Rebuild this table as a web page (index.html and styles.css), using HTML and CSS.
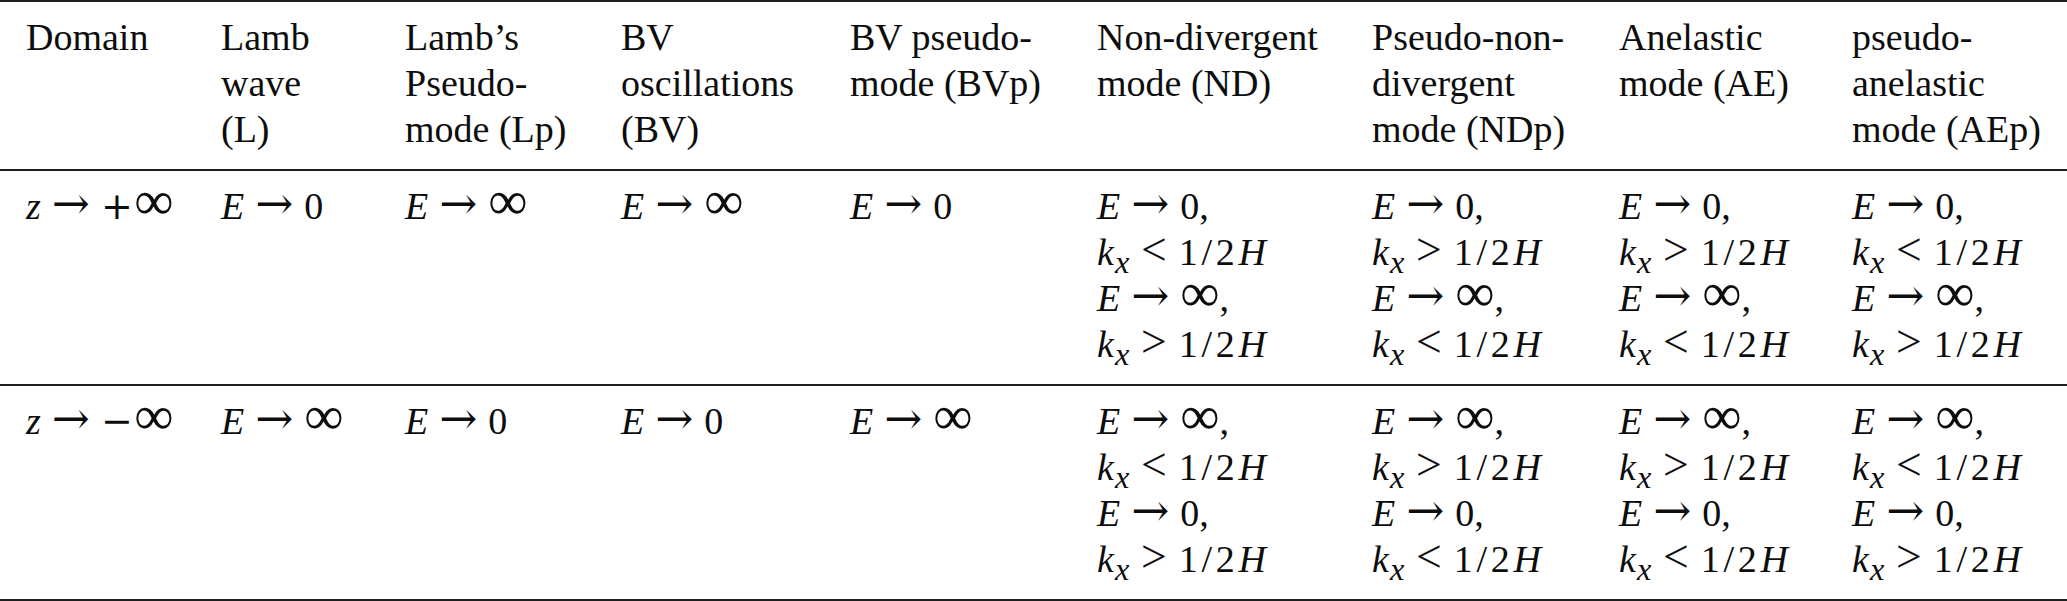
FILE: index.html
```html
<!DOCTYPE html>
<html lang="en">
<head>
    <meta charset="UTF-8">
    <meta name="viewport" content="width=device-width, initial-scale=1.0">
    <title>Energy limits by mode</title>
    <link rel="stylesheet" href="styles.css">
</head>
<body>
    <table class="modes">
        <colgroup>
            <col class="c-domain">
            <col class="c-l">
            <col class="c-lp">
            <col class="c-bv">
            <col class="c-bvp">
            <col class="c-nd">
            <col class="c-ndp">
            <col class="c-ae">
            <col class="c-aep">
        </colgroup>
        <thead>
            <tr>
                <th>Domain</th>
                <th>Lamb<br>wave<br>(L)</th>
                <th>Lamb&#8217;s<br>Pseudo-<br>mode (Lp)</th>
                <th>BV<br>oscillations<br>(BV)</th>
                <th>BV pseudo-<br>mode (BVp)</th>
                <th>Non-divergent<br>mode (ND)</th>
                <th>Pseudo-non-<br>divergent<br>mode (NDp)</th>
                <th>Anelastic<br>mode (AE)</th>
                <th>pseudo-<br>anelastic<br>mode (AEp)</th>
            </tr>
        </thead>
        <tbody>
            <tr>
                <td><i>z</i><span class="arrow">&#8594;</span><span class="sign">+</span><span class="inf">&#8734;</span></td>
                <td><i>E</i><span class="arrow">&#8594;</span>0</td>
                <td><i>E</i><span class="arrow">&#8594;</span><span class="inf">&#8734;</span></td>
                <td><i>E</i><span class="arrow">&#8594;</span><span class="inf">&#8734;</span></td>
                <td><i>E</i><span class="arrow">&#8594;</span>0</td>
                <td>
                    <i>E</i><span class="arrow">&#8594;</span>0,<br>
                    <i>k</i><sub>x</sub><span class="rel">&lt;</span>1<span class="sl">/</span>2<i class="h">H</i><br>
                    <i>E</i><span class="arrow">&#8594;</span><span class="inf">&#8734;</span>,<br>
                    <i>k</i><sub>x</sub><span class="rel">&gt;</span>1<span class="sl">/</span>2<i class="h">H</i>
                </td>
                <td>
                    <i>E</i><span class="arrow">&#8594;</span>0,<br>
                    <i>k</i><sub>x</sub><span class="rel">&gt;</span>1<span class="sl">/</span>2<i class="h">H</i><br>
                    <i>E</i><span class="arrow">&#8594;</span><span class="inf">&#8734;</span>,<br>
                    <i>k</i><sub>x</sub><span class="rel">&lt;</span>1<span class="sl">/</span>2<i class="h">H</i>
                </td>
                <td>
                    <i>E</i><span class="arrow">&#8594;</span>0,<br>
                    <i>k</i><sub>x</sub><span class="rel">&gt;</span>1<span class="sl">/</span>2<i class="h">H</i><br>
                    <i>E</i><span class="arrow">&#8594;</span><span class="inf">&#8734;</span>,<br>
                    <i>k</i><sub>x</sub><span class="rel">&lt;</span>1<span class="sl">/</span>2<i class="h">H</i>
                </td>
                <td>
                    <i>E</i><span class="arrow">&#8594;</span>0,<br>
                    <i>k</i><sub>x</sub><span class="rel">&lt;</span>1<span class="sl">/</span>2<i class="h">H</i><br>
                    <i>E</i><span class="arrow">&#8594;</span><span class="inf">&#8734;</span>,<br>
                    <i>k</i><sub>x</sub><span class="rel">&gt;</span>1<span class="sl">/</span>2<i class="h">H</i>
                </td>
            </tr>
            <tr>
                <td><i>z</i><span class="arrow">&#8594;</span><span class="sign">&#8722;</span><span class="inf">&#8734;</span></td>
                <td><i>E</i><span class="arrow">&#8594;</span><span class="inf">&#8734;</span></td>
                <td><i>E</i><span class="arrow">&#8594;</span>0</td>
                <td><i>E</i><span class="arrow">&#8594;</span>0</td>
                <td><i>E</i><span class="arrow">&#8594;</span><span class="inf">&#8734;</span></td>
                <td>
                    <i>E</i><span class="arrow">&#8594;</span><span class="inf">&#8734;</span>,<br>
                    <i>k</i><sub>x</sub><span class="rel">&lt;</span>1<span class="sl">/</span>2<i class="h">H</i><br>
                    <i>E</i><span class="arrow">&#8594;</span>0,<br>
                    <i>k</i><sub>x</sub><span class="rel">&gt;</span>1<span class="sl">/</span>2<i class="h">H</i>
                </td>
                <td>
                    <i>E</i><span class="arrow">&#8594;</span><span class="inf">&#8734;</span>,<br>
                    <i>k</i><sub>x</sub><span class="rel">&gt;</span>1<span class="sl">/</span>2<i class="h">H</i><br>
                    <i>E</i><span class="arrow">&#8594;</span>0,<br>
                    <i>k</i><sub>x</sub><span class="rel">&lt;</span>1<span class="sl">/</span>2<i class="h">H</i>
                </td>
                <td>
                    <i>E</i><span class="arrow">&#8594;</span><span class="inf">&#8734;</span>,<br>
                    <i>k</i><sub>x</sub><span class="rel">&gt;</span>1<span class="sl">/</span>2<i class="h">H</i><br>
                    <i>E</i><span class="arrow">&#8594;</span>0,<br>
                    <i>k</i><sub>x</sub><span class="rel">&lt;</span>1<span class="sl">/</span>2<i class="h">H</i>
                </td>
                <td>
                    <i>E</i><span class="arrow">&#8594;</span><span class="inf">&#8734;</span>,<br>
                    <i>k</i><sub>x</sub><span class="rel">&lt;</span>1<span class="sl">/</span>2<i class="h">H</i><br>
                    <i>E</i><span class="arrow">&#8594;</span>0,<br>
                    <i>k</i><sub>x</sub><span class="rel">&gt;</span>1<span class="sl">/</span>2<i class="h">H</i>
                </td>
            </tr>
        </tbody>
    </table>
</body>
</html>
```

FILE: styles.css
```css
body {
    margin: 0;
    padding: 0;
    background-color: #ffffff;
    color: #0d0d0d;
    font-family: "Liberation Serif", "Times New Roman", serif;
}

.modes {
    width: 100%;
    border-collapse: collapse;
    table-layout: fixed;
    font-size: 38px;
    line-height: 46px;
    border-top: 2px solid #1e1e1e;
    border-bottom: 2px solid #1e1e1e;
}

.c-domain { width: 221px; }
.c-l { width: 184px; }
.c-lp { width: 216px; }
.c-bv { width: 229px; }
.c-bvp { width: 247px; }
.c-nd { width: 275px; }
.c-ndp { width: 247px; }
.c-ae { width: 233px; }
.c-aep { width: 215px; }

.modes th,
.modes td {
    text-align: left;
    vertical-align: top;
    font-weight: normal;
    padding: 12px 0 17px 0;
    white-space: nowrap;
}

.modes th:first-child,
.modes td:first-child {
    padding-left: 26px;
}

.modes thead tr,
.modes tbody tr {
    border-bottom: 2px solid #1e1e1e;
}

.modes i {
    font-style: italic;
}

.modes sub {
    font-style: italic;
    font-size: 0.85em;
    line-height: 0;
    vertical-align: -0.24em;
    margin-left: 1px;
}

.modes .h {
    margin-left: 0.1em;
}

.sl {
    margin: 0 0.1em;
}

/* relations: arrow, <, > */
.rel {
    font-size: 1.2em;
    line-height: 0;
    margin: 0 0.26em;
}

.arrow {
    font-family: "DejaVu Serif", serif;
    font-size: 1.2em;
    line-height: 0;
    margin: 0 0.24em;
}

.sign {
    font-family: "DejaVu Serif", serif;
    font-size: 1em;
    line-height: 0;
    margin-right: 0.04em;
}

.inf {
    font-size: 1.45em;
    line-height: 0;
}
```
